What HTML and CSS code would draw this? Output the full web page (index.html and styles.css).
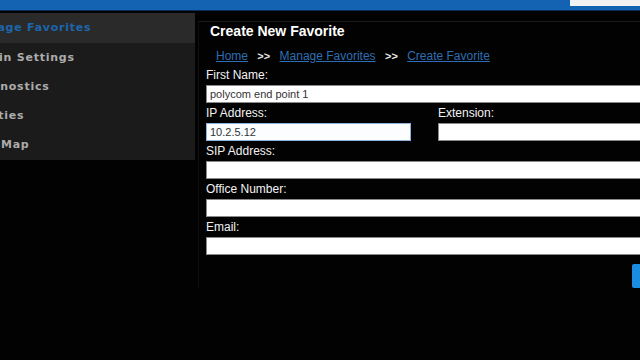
FILE: index.html
```
<!DOCTYPE html>
<html lang="en">

<head>
    <meta charset="UTF-8">
    <title>Create New Favorite</title>
    <link rel="stylesheet" href="styles.css">
</head>

<body>
    <div class="topbar">
        <div class="top-field"></div>
    </div>
    <div class="main">
        <div class="sidebar">
            <div class="nav-item active">Manage Favorites</div>
            <div class="nav-item">Admin Settings</div>
            <div class="nav-item">Diagnostics</div>
            <div class="nav-item">Utilities</div>
            <div class="nav-item">Site Map</div>
        </div>
        <div class="panel">
            <div class="title">Create New Favorite</div>
            <div class="crumbs">
                <a href="#">Home</a>
                <span class="sep">&gt;&gt;</span>
                <a href="#">Manage Favorites</a>
                <span class="sep">&gt;&gt;</span>
                <a href="#">Create Favorite</a>
            </div>
            <div class="form">
                <div class="field">
                    <label>First Name:</label>
                    <input type="text" value="polycom end point 1">
                </div>
                <div class="row">
                    <div class="field ip">
                        <label>IP Address:</label>
                        <input type="text" class="focus" value="10.2.5.12">
                    </div>
                    <div class="field ext">
                        <label>Extension:</label>
                        <input type="text">
                    </div>
                </div>
                <div class="field">
                    <label>SIP Address:</label>
                    <input type="text">
                </div>
                <div class="field">
                    <label>Office Number:</label>
                    <input type="text">
                </div>
                <div class="field">
                    <label>Email:</label>
                    <input type="text">
                </div>
                <div class="actions">
                    <button class="btn">Save</button>
                </div>
            </div>
        </div>
    </div>
</body>

</html>
```

FILE: styles.css
```
    * {
        box-sizing: border-box;
    }

    body {
        margin: 0;
        width: 640px;
        height: 360px;
        overflow: hidden;
        background: #020202;
        font-family: "Liberation Sans", Arial, sans-serif;
    }

    .topbar {
        height: 11px;
        background: #1462b2;
        border-bottom: 1px solid #0b2c55;
        display: flex;
        justify-content: flex-end;
    }

    .top-field {
        width: 70px;
        height: 6px;
        background: #f2f2f2;
    }

    .main {
        display: flex;
        margin-top: 2px;
    }

    .sidebar {
        width: 195px;
        flex: none;
        align-self: flex-start;
        background: #1b1b1b;
        padding-bottom: 1px;
    }

    .nav-item {
        height: 29px;
        line-height: 29px;
        text-indent: -31px;
        white-space: nowrap;
        overflow: hidden;
        font-family: "DejaVu Sans", Verdana, sans-serif;
        font-weight: bold;
        font-size: 11px;
        letter-spacing: 0.75px;
        color: #acacac;
    }

    .nav-item.active {
        height: 30px;
        line-height: 30px;
        background: #2a2a2a;
        color: #1c66ad;
    }

    .panel {
        width: 520px;
        flex: none;
        margin-left: 3px;
        margin-top: 8px;
        border-left: 1px solid #101010;
        border-top: 1px solid #1a1a1a;
        padding-left: 7px;
    }

    .title {
        height: 18px;
        line-height: 18px;
        padding-left: 4px;
        font-size: 14px;
        font-weight: bold;
        color: #fff;
    }

    .crumbs {
        margin-top: 8px;
        height: 16px;
        line-height: 16px;
        padding-left: 10px;
        font-size: 12px;
        white-space: nowrap;
    }

    .crumbs a {
        color: #2e6fb3;
    }

    .crumbs .sep {
        color: #e8e8e8;
        font-weight: bold;
        font-size: 11px;
        margin: 0 6px;
    }

    .form {
        margin-top: 1px;
    }

    .field label {
        display: block;
        height: 20px;
        line-height: 20px;
        font-size: 12px;
        color: #f2f2f2;
    }

    .field input {
        display: block;
        width: 100%;
        height: 18px;
        margin: 0;
        padding: 0 3px;
        border: 1px solid #8a8a8a;
        background: #fff;
        font-family: "Liberation Sans", Arial, sans-serif;
        font-size: 11px;
        color: #333;
    }

    .field input.focus {
        border-color: #8fb2dc;
        background: #fbfdff;
    }

    .row {
        display: flex;
        gap: 27px;
    }

    .ip {
        width: 205px;
    }

    .ext {
        flex: 1;
    }

    .actions {
        margin-top: 9px;
        padding-left: 426px;
    }

    .btn {
        width: 70px;
        height: 24px;
        border: 0;
        border-radius: 2px;
        background: #1a8de0;
        color: #fff;
    }
```
